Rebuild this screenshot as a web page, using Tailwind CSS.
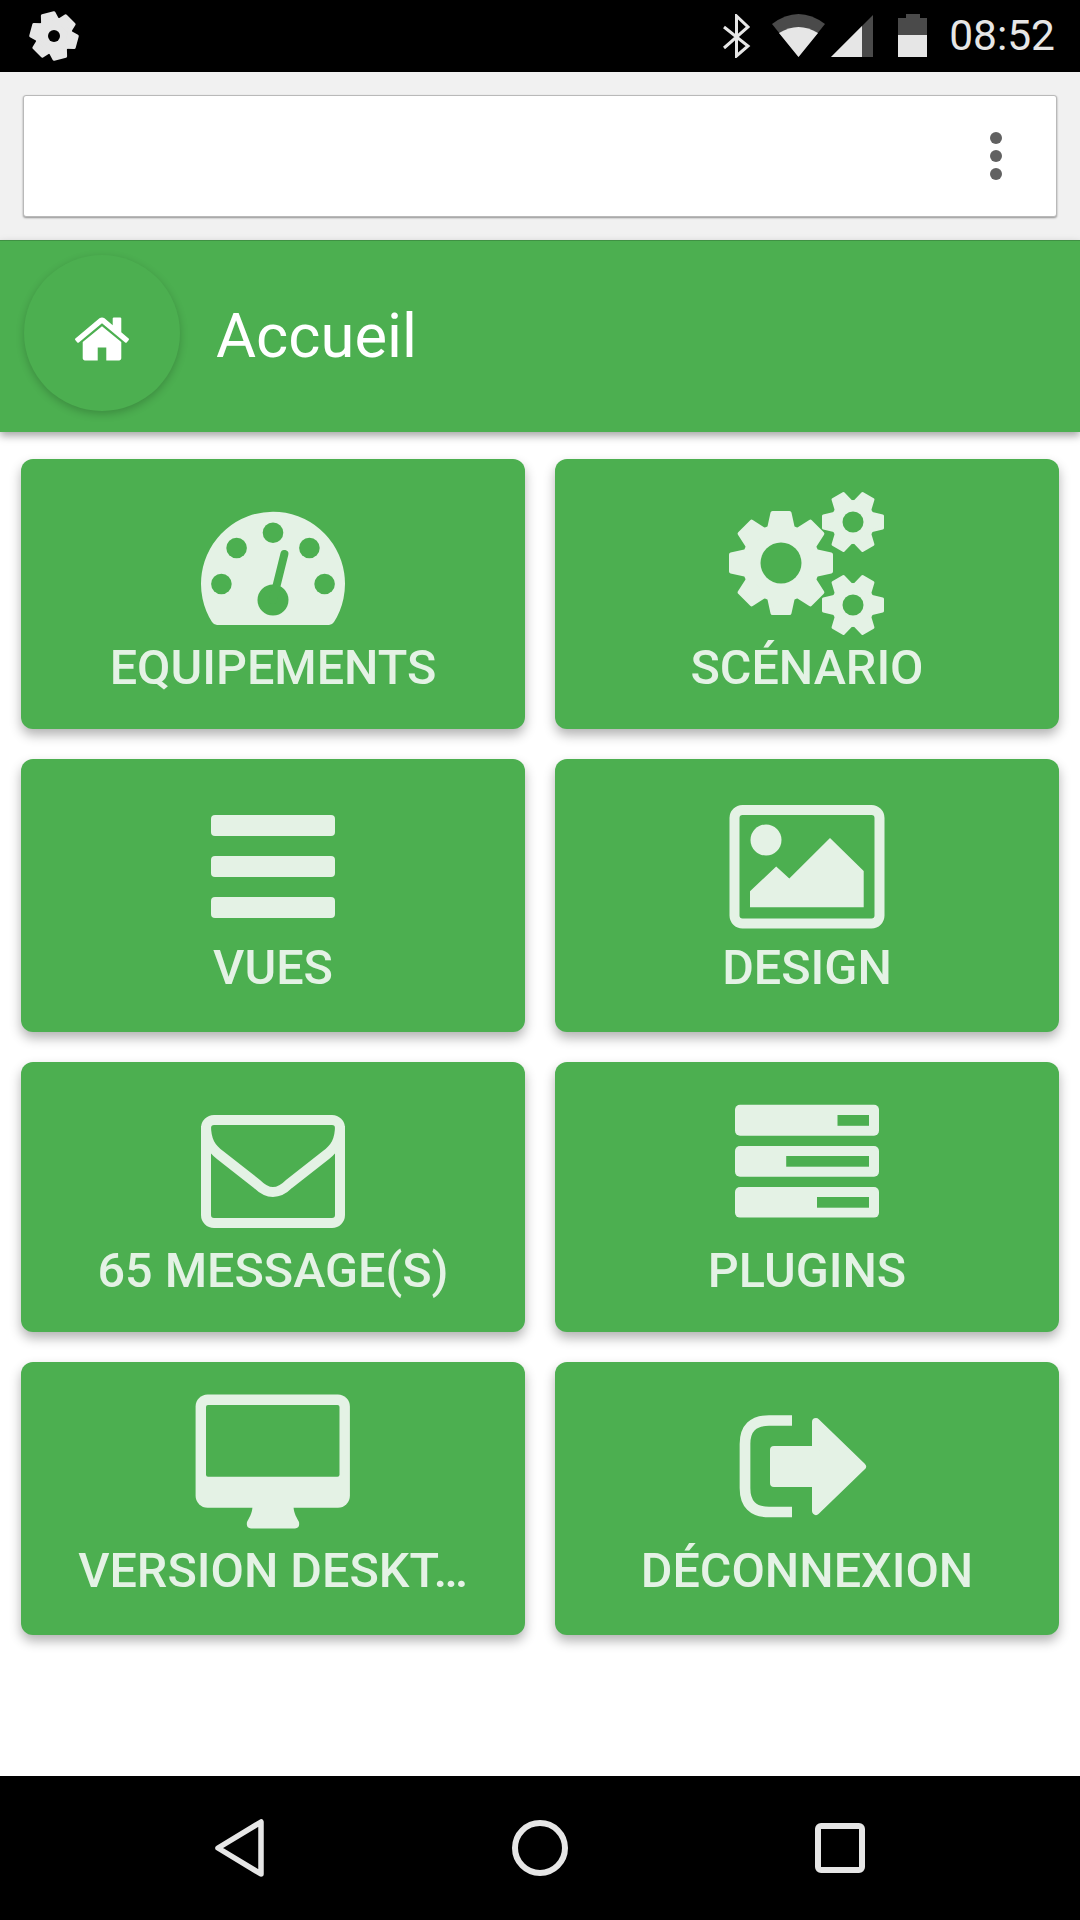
<!DOCTYPE html>
<html lang="fr">
  <head>
    <meta charset="UTF-8" />
    <title>Accueil</title>
    <script src="https://cdn.jsdelivr.net/npm/@tailwindcss/browser@4"></script>
  </head>

  <body class="w-[1080px] h-[1920px] flex flex-col bg-white font-['Roboto',sans-serif] overflow-hidden">
    <!-- Status bar -->
    <div class="h-[72px] shrink-0 bg-black flex items-center pl-[24px] pr-[25px] text-[#e6e6e6]">
      <svg class="w-[60px] h-[60px] mb-[1px]" viewBox="-30 -30 60 60" fill="#e6e6e6" stroke="#e6e6e6" stroke-width="3" stroke-linejoin="round">
        <circle r="17" />
        <polygon points="-6,-22.500 6,-22.500 8,-14 -8,-14" transform="rotate(-15)" />
        <polygon points="-6,-22.500 6,-22.500 8,-14 -8,-14" transform="rotate(45)" />
        <polygon points="-6,-22.500 6,-22.500 8,-14 -8,-14" transform="rotate(105)" />
        <polygon points="-6,-22.500 6,-22.500 8,-14 -8,-14" transform="rotate(165)" />
        <polygon points="-6,-22.500 6,-22.500 8,-14 -8,-14" transform="rotate(225)" />
        <polygon points="-6,-22.500 6,-22.500 8,-14 -8,-14" transform="rotate(285)" />
        <circle r="6" fill="#000" stroke="none" />
      </svg>
      <div class="ml-auto flex items-center">
        <!-- bluetooth -->
        <svg class="w-[29px] h-[44px]" viewBox="0 0 29 44" fill="none" stroke="#e6e6e6" stroke-width="3">
          <path d="M2 13L26 32L14.500 42V2L26 13L2 34" />
        </svg>
        <!-- wifi -->
        <svg class="w-[53px] h-[44px] ml-[21px]" viewBox="0 0 53 44">
          <path d="M26.500 43L0 10Q26.500 -10 53 10Z" fill="#4a4a4a" />
          <path d="M26.500 43L7 19Q26.500 7 46 19Z" fill="#e6e6e6" />
        </svg>
        <!-- signal -->
        <svg class="w-[42px] h-[44px] ml-[6px]" viewBox="0 0 42 44">
          <path d="M42 1V43H0Z" fill="#4a4a4a" />
          <path d="M31 12V43H0Z" fill="#e6e6e6" />
        </svg>
        <!-- battery -->
        <svg class="w-[29px] h-[44px] ml-[25px]" viewBox="0 0 29 44">
          <path d="M8 0H22V4H29V21H0V4H8Z" fill="#4a4a4a" />
          <rect y="21" width="29" height="22" fill="#e6e6e6" />
        </svg>
        <span class="ml-[22px] text-[42.500px] leading-none">08:52</span>
      </div>
    </div>

    <!-- Top bar with menu box -->
    <div class="h-[168px] shrink-0 bg-[#f1f1f1] pt-[23px] px-[23px]">
      <div class="h-[122px] bg-white rounded-[3px] border border-[#b9b9b9] shadow-[0_1px_2px_rgba(0,0,0,0.4)] flex items-center justify-end pr-[54px]">
        <div class="flex flex-col gap-[6px]">
          <span class="w-[12px] h-[12px] rounded-full bg-[#616161]"></span>
          <span class="w-[12px] h-[12px] rounded-full bg-[#616161]"></span>
          <span class="w-[12px] h-[12px] rounded-full bg-[#616161]"></span>
        </div>
      </div>
    </div>

    <!-- Page header -->
    <header class="relative h-[192px] shrink-0 bg-[#4caf50] border-t border-[#3f9143] shadow-[0_4px_8px_rgba(0,0,0,0.35)] flex items-center pl-[24px]">
      <div class="w-[156px] h-[156px] mb-[7px] rounded-full bg-[#4caf50] shadow-[0_3px_8px_rgba(0,0,0,0.2)] flex items-center justify-center">
        <svg class="w-[60px] h-[60px] mt-[12px]" viewBox="0 0 1792 1792" fill="#fff">
          <path d="M1472 992v480q0 26-19 45t-45 19h-384v-384h-256v384h-384q-26 0-45-19t-19-45v-480q0-1 .5-3t.5-3l575-474 575 474q1 2 1 6zm223-69l-62 74q-8 9-21 11h-3q-13 0-21-7l-692-577-692 577q-12 8-24 7-13-2-21-11l-62-74q-8-10-7-23.500t11-21.500l719-599q32-26 76-26t76 26l244 204v-195q0-14 9-23t23-9h192q14 0 23 9t9 23v408l219 182q10 8 11 21.500t-7 23.500z" />
        </svg>
      </div>
      <h1 class="ml-[36px] text-[61.500px] leading-none text-white">Accueil</h1>
    </header>

    <!-- Menu grid -->
    <main class="flex-1 grid grid-cols-2 grid-rows-[270px_273px_270px_273px] gap-x-[30px] gap-y-[30px] px-[21px] pt-[27px] content-start">
      <a class="flex flex-col items-center rounded-[12px] bg-[#4caf50] text-[#e4f2e5] text-[48.500px] leading-[58px] font-medium shadow-[0_6px_12px_rgba(0,0,0,0.3)] pt-[24px]">
        <svg class="w-[200px] h-[156px] shrink-0" viewBox="0 0 200 156">
          <path d="M44 142Q41 142 39 139A72 72 0 1 1 161 139Q159 142 156 142Z" fill="#e4f2e5" />
          <g fill="#4caf50">
            <circle cx="100" cy="49.700" r="10.300" />
            <circle cx="63.600" cy="65" r="10.300" />
            <circle cx="136.400" cy="65" r="10.300" />
            <circle cx="48.400" cy="101" r="10.300" />
            <circle cx="151.600" cy="101" r="10.300" />
            <circle cx="100" cy="117" r="15.500" />
          </g>
          <path d="M100 117L111.400 71" stroke="#4caf50" stroke-width="8" stroke-linecap="round" />
        </svg>
        <span>EQUIPEMENTS</span>
      </a>

      <a class="flex flex-col items-center rounded-[12px] bg-[#4caf50] text-[#e4f2e5] text-[48.500px] leading-[58px] font-medium shadow-[0_6px_12px_rgba(0,0,0,0.3)] pt-[24px]">
        <svg class="w-[200px] h-[156px] shrink-0" viewBox="0 0 200 156" fill="#e4f2e5" stroke="#e4f2e5" stroke-linejoin="round">
          <defs>
            <g id="small-gear" stroke-width="3">
              <circle r="22" stroke="none" />
              <polygon points="-6,-29.500 6,-29.500 8.500,-19 -8.500,-19" transform="rotate(30)" />
              <polygon points="-6,-29.500 6,-29.500 8.500,-19 -8.500,-19" transform="rotate(90)" />
              <polygon points="-6,-29.500 6,-29.500 8.500,-19 -8.500,-19" transform="rotate(150)" />
              <polygon points="-6,-29.500 6,-29.500 8.500,-19 -8.500,-19" transform="rotate(210)" />
              <polygon points="-6,-29.500 6,-29.500 8.500,-19 -8.500,-19" transform="rotate(270)" />
              <polygon points="-6,-29.500 6,-29.500 8.500,-19 -8.500,-19" transform="rotate(330)" />
              <circle r="10.500" fill="#4caf50" stroke="none" />
            </g>
          </defs>
          <g transform="translate(74 80)" stroke-width="4">
            <circle r="39" stroke="none" />
            <polygon points="-8.500,-50 8.500,-50 12,-34 -12,-34" />
            <polygon points="-8.500,-50 8.500,-50 12,-34 -12,-34" transform="rotate(45)" />
            <polygon points="-8.500,-50 8.500,-50 12,-34 -12,-34" transform="rotate(90)" />
            <polygon points="-8.500,-50 8.500,-50 12,-34 -12,-34" transform="rotate(135)" />
            <polygon points="-8.500,-50 8.500,-50 12,-34 -12,-34" transform="rotate(180)" />
            <polygon points="-8.500,-50 8.500,-50 12,-34 -12,-34" transform="rotate(225)" />
            <polygon points="-8.500,-50 8.500,-50 12,-34 -12,-34" transform="rotate(270)" />
            <polygon points="-8.500,-50 8.500,-50 12,-34 -12,-34" transform="rotate(315)" />
            <circle r="20.500" fill="#4caf50" stroke="none" />
          </g>
          <use href="#small-gear" x="146" y="39" />
          <use href="#small-gear" x="146" y="122" />
        </svg>
        <span>SCÉNARIO</span>
      </a>

      <a class="flex flex-col items-center rounded-[12px] bg-[#4caf50] text-[#e4f2e5] text-[48.500px] leading-[58px] font-medium shadow-[0_6px_12px_rgba(0,0,0,0.3)] pt-[24px]">
        <svg class="w-[200px] h-[156px] shrink-0" viewBox="0 0 200 156" fill="#e4f2e5">
          <rect x="38" y="32" width="124" height="21" rx="4" />
          <rect x="38" y="73" width="124" height="21" rx="4" />
          <rect x="38" y="114" width="124" height="21" rx="4" />
        </svg>
        <span>VUES</span>
      </a>

      <a class="flex flex-col items-center rounded-[12px] bg-[#4caf50] text-[#e4f2e5] text-[48.500px] leading-[58px] font-medium shadow-[0_6px_12px_rgba(0,0,0,0.3)] pt-[24px]">
        <svg class="w-[200px] h-[156px] shrink-0" viewBox="0 0 200 156" fill="#e4f2e5">
          <rect x="27.500" y="27" width="145" height="113.500" rx="8" fill="none" stroke="#e4f2e5" stroke-width="10" />
          <circle cx="59" cy="57" r="15.500" />
          <polygon points="43,124.300 43,108.300 69.200,83.400 82.300,95.600 123,55 156.700,88 156.700,124.300" />
        </svg>
        <span>DESIGN</span>
      </a>

      <a class="flex flex-col items-center rounded-[12px] bg-[#4caf50] text-[#e4f2e5] text-[48.500px] leading-[58px] font-medium shadow-[0_6px_12px_rgba(0,0,0,0.3)] pt-[24px]">
        <svg class="w-[200px] h-[156px] shrink-0" viewBox="0 0 200 156" fill="none" stroke="#e4f2e5" stroke-width="10">
          <rect x="33" y="34" width="134" height="103" rx="8" />
          <path d="M33 40C33 55 38 62 47 69L84 98Q92 106 100 106Q108 106 116 98L153 69C162 62 167 55 167 40" />
        </svg>
        <span>65 MESSAGE(S)</span>
      </a>

      <a class="flex flex-col items-center rounded-[12px] bg-[#4caf50] text-[#e4f2e5] text-[48.500px] leading-[58px] font-medium shadow-[0_6px_12px_rgba(0,0,0,0.3)] pt-[24px]">
        <svg class="w-[200px] h-[156px] shrink-0" viewBox="0 0 200 156" fill="#e4f2e5">
          <rect x="28" y="18.700" width="144" height="31" rx="5" />
          <rect x="28" y="60" width="144" height="30.700" rx="5" />
          <rect x="28" y="101" width="144" height="30.600" rx="5" />
          <g fill="#4caf50">
            <rect x="130.500" y="29" width="31.500" height="10.800" />
            <rect x="79.200" y="70" width="82.800" height="10.700" />
            <rect x="110" y="111" width="52" height="10.700" />
          </g>
        </svg>
        <span>PLUGINS</span>
      </a>

      <a class="flex flex-col items-center rounded-[12px] bg-[#4caf50] text-[#e4f2e5] text-[48.500px] leading-[58px] font-medium shadow-[0_6px_12px_rgba(0,0,0,0.3)] pt-[24px]">
        <svg class="w-[200px] h-[156px] shrink-0" viewBox="0 0 200 156" fill="#e4f2e5">
          <rect x="22.600" y="8.400" width="154.300" height="113.300" rx="12" />
          <rect x="33" y="19" width="133.500" height="71.700" rx="2" fill="#4caf50" />
          <path d="M79.500 121H120.500C121 128 124 132 126 136Q127 142.400 122 142.400H78Q73 142.400 74 136C76 132 79 128 79.500 121Z" />
        </svg>
        <span>VERSION DESKT…</span>
      </a>

      <a class="flex flex-col items-center rounded-[12px] bg-[#4caf50] text-[#e4f2e5] text-[48.500px] leading-[58px] font-medium shadow-[0_6px_12px_rgba(0,0,0,0.3)] pt-[24px]">
        <svg class="w-[200px] h-[156px] shrink-0" viewBox="0 0 200 156">
          <path d="M85 34.500H62Q38 34.500 38 58V102Q38 126 62 126H85" fill="none" stroke="#e4f2e5" stroke-width="10.700" />
          <polygon points="67,64 109,64 109,36 155,80.500 109,125 109,97 67,97" fill="#e4f2e5" stroke="#e4f2e5" stroke-width="8" stroke-linejoin="round" />
        </svg>
        <span>DÉCONNEXION</span>
      </a>
    </main>

    <!-- Navigation bar -->
    <nav class="h-[144px] shrink-0 bg-black flex items-center justify-center gap-[240px]">
      <svg class="w-[60px] h-[60px]" viewBox="0 0 60 60" fill="none" stroke="#e6e6e6" stroke-width="5.500" stroke-linejoin="round">
        <path d="M8 30L51 4V56Z" />
      </svg>
      <svg class="w-[60px] h-[60px]" viewBox="0 0 60 60" fill="none" stroke="#e6e6e6" stroke-width="6">
        <circle cx="30" cy="30" r="25" />
      </svg>
      <svg class="w-[60px] h-[60px]" viewBox="0 0 60 60" fill="none" stroke="#e6e6e6" stroke-width="6">
        <rect x="8" y="8" width="44" height="44" rx="3" />
      </svg>
    </nav>
  </body>
</html>
